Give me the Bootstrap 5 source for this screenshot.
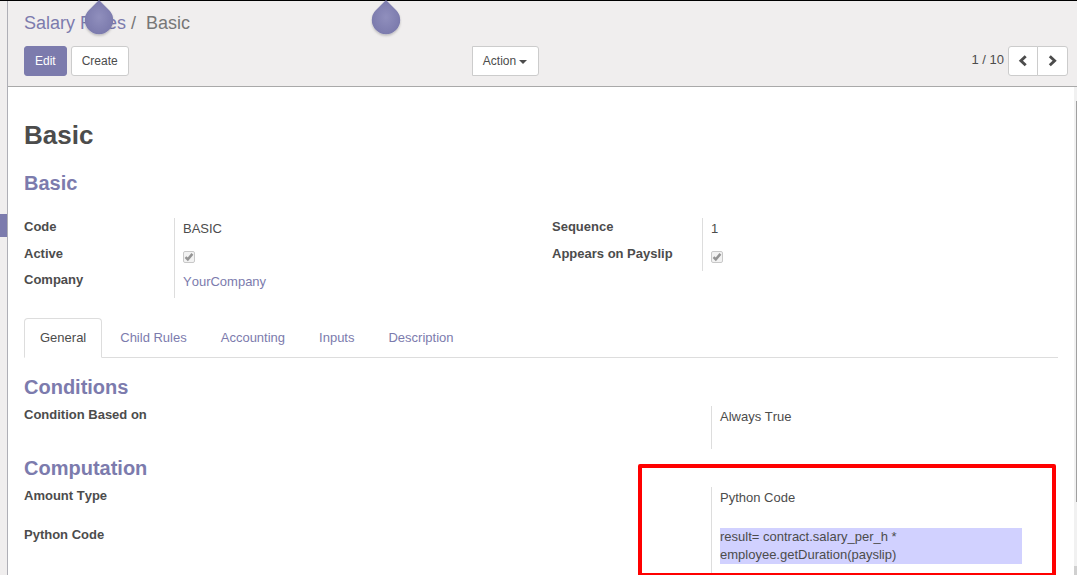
<!DOCTYPE html>
<html lang="en">
<head>
<meta charset="utf-8">
<title>Salary Rules / Basic</title>
<link href="https://cdn.jsdelivr.net/npm/bootstrap@5.3.0/dist/css/bootstrap.min.css" rel="stylesheet">
<style>
:root { --brand: #7c7bad; --ink: #4c4c4c; --line: #dddddd; }
body { font: 13px/18px "Liberation Sans", Arial, sans-serif; font-kerning: none; color: var(--ink); background: #fff; overflow: hidden; }
a { color: var(--brand); text-decoration: none; }
.app { height: 575px; border-top: 1px solid #000; }
.side { width: 8px; background: #f0eeee; border-right: 1px solid #afafb6; padding-top: 213px; }
.side-active { width: 7px; height: 23px; background: var(--brand); }
.panel { height: 86px; background: #f0eeee; border-bottom: 1px solid #a9a9a9; padding: 9px 9px 0 16px; }
.crumbs { font-size: 18px; line-height: 26px; height: 36px; color: #777; white-space: pre; }
.btn { --bs-btn-font-size: 12px; --bs-btn-line-height: 18px; --bs-btn-padding-x: 10px; --bs-btn-padding-y: 5px; --bs-btn-border-radius: 3px; height: 30px; }
.btn-brand { --bs-btn-color: #fff; --bs-btn-bg: #7c7bad; --bs-btn-border-color: #7c7bad; }
.btn-plain { --bs-btn-color: #4c4c4c; --bs-btn-bg: #fff; --bs-btn-border-color: #ccc; }
.btn-group > .btn-plain { width: 30px; padding: 0; }
.btn-group > .btn-plain + .btn-plain { width: 31px; }
.action { width: 67px; border-radius: 0 3px 3px 0; }
.toolbar { display: grid; grid-template-columns: 448px 1fr auto; }
.action::after { margin-left: 3px; margin-right: 1px; vertical-align: 1px; border-top-width: 4px; border-left-width: 4px; border-right-width: 4px; }
.pager-text { line-height: 28px; margin-right: 4px; }
.sheet { padding: 33px 16px 0; height: 488px; }
h1 { font-size: 26px; line-height: 30px; font-weight: 700; margin: 0 0 21px; }
h2 { font-size: 20px; line-height: 24px; font-weight: 700; color: var(--brand); margin: 0; }
.nav-tabs + h2 { margin-top: 17px; }
.fields { display: grid; grid-template-columns: 150px 1fr; align-content: start; grid-auto-rows: 27px; width: 528px; }
.fields-wide { grid-template-columns: 687px 1fr; width: 1034px; }
.fields label { font-weight: 700; }
.value { border-left: 1px solid var(--line); padding: 2px 0 0 8px; }
.groups { margin-top: 23px; height: 100px; }
.left-group { grid-template-rows: 27px 26px 27px; }
.right-group { width: 506px; grid-template-rows: 27px 26px; }
.tick { display: block; margin-top: 4px; }
.nav-tabs { --bs-nav-tabs-border-color: #ddd; --bs-nav-tabs-link-active-color: #4c4c4c; --bs-nav-tabs-link-active-border-color: #ddd #ddd #fff; --bs-nav-tabs-border-radius: 4px; --bs-nav-link-padding-x: 15px; --bs-nav-link-padding-y: 10px; --bs-nav-link-color: #7c7bad; column-gap: 2px; height: 40px; }
.nav-tabs .nav-link { height: 40px; }
.conditions { margin: 7px 0; height: 43px; grid-auto-rows: 43px; }
.computation { margin-top: 7px; grid-template-rows: 39px 47px; }
.code { background: #d1d1ff; width: 302px; }
.marker { left: 638px; top: 464px; width: 418px; height: 113px; border: 4px solid #f00; border-radius: 2px; }
.scroll { width: 3px; height: 488px; background: #f1f1f1; padding-top: 14px; }
.thumb { width: 1px; height: 401px; margin-left: 2px; background: #a0a0a0; }
.scroll-end { height: 9px; margin-top: 64px; background: #d0d0d0; }
.drop { top: 0; }
.drop-one { left: 80px; }
.drop-two { left: 367px; }
</style>
</head>
<body>
<div class="app d-flex">
  <aside class="side flex-shrink-0"><div class="side-active"></div></aside>
  <main class="flex-grow-1">
    <header class="panel">
      <div class="crumbs"><a href="#">Salary Rules</a> /  Basic</div>
      <div class="toolbar">
        <div class="d-flex gap-1 align-items-start"><button class="btn btn-brand">Edit</button><button class="btn btn-plain">Create</button></div>
        <div><button class="btn btn-plain action dropdown-toggle px-0">Action</button></div>
        <div class="d-flex">
          <span class="pager-text">1 / 10</span>
          <div class="btn-group">
            <button class="btn btn-plain" aria-label="Previous"><svg class="d-block mx-auto" width="10" height="12" viewBox="0 0 10 12"><path d="M7.7 1.2 2.9 5.7l4.8 4.5" fill="none" stroke="#4c4c4c" stroke-width="2.9"/></svg></button>
            <button class="btn btn-plain" aria-label="Next"><svg class="d-block mx-auto" width="10" height="12" viewBox="0 0 10 12"><path d="M1.8 1.2 6.6 5.7l-4.8 4.5" fill="none" stroke="#4c4c4c" stroke-width="2.9"/></svg></button>
          </div>
        </div>
      </div>
    </header>
    <div class="d-flex">
      <section class="sheet flex-grow-1">
        <h1>Basic</h1>
        <h2>Basic</h2>
        <div class="groups d-flex">
          <div class="fields left-group">
            <label>Code</label><div class="value">BASIC</div>
            <label>Active</label><div class="value"><svg class="tick" width="12" height="12" viewBox="0 0 12 12"><rect x=".5" y=".5" width="11" height="11" rx="1.5" fill="#f2f2f2" stroke="#c8c8c8"/><path d="M2.5 6.2 4.8 8.4 9.4 2.9" fill="none" stroke="#949494" stroke-width="2.5"/></svg></div>
            <label>Company</label><div class="value"><a href="#">YourCompany</a></div>
          </div>
          <div class="fields right-group">
            <label>Sequence</label><div class="value">1</div>
            <label>Appears on Payslip</label><div class="value"><svg class="tick" width="12" height="12" viewBox="0 0 12 12"><rect x=".5" y=".5" width="11" height="11" rx="1.5" fill="#f2f2f2" stroke="#c8c8c8"/><path d="M2.5 6.2 4.8 8.4 9.4 2.9" fill="none" stroke="#949494" stroke-width="2.5"/></svg></div>
          </div>
        </div>
        <ul class="nav nav-tabs">
          <li class="nav-item"><a class="nav-link active" href="#">General</a></li>
          <li class="nav-item"><a class="nav-link" href="#">Child Rules</a></li>
          <li class="nav-item"><a class="nav-link" href="#">Accounting</a></li>
          <li class="nav-item"><a class="nav-link" href="#">Inputs</a></li>
          <li class="nav-item"><a class="nav-link" href="#">Description</a></li>
        </ul>
        <h2>Conditions</h2>
        <div class="fields fields-wide conditions"><label>Condition Based on</label><div class="value">Always True</div></div>
        <h2>Computation</h2>
        <div class="fields fields-wide computation">
          <label>Amount Type</label><div class="value">Python Code</div>
          <label>Python Code</label><div class="value"><div class="code">result= contract.salary_per_h *<br>employee.getDuration(payslip)</div></div>
        </div>
      </section>
      <div class="scroll"><div class="thumb"></div><div class="scroll-end"></div></div>
    </div>
  </main>
</div>
<!-- selection handles and highlight frame float above the form -->
<svg class="drop drop-one position-absolute" width="38" height="40" viewBox="0 0 38 40"><defs><radialGradient id="dg"><stop offset="0" stop-color="#908fbd"/><stop offset="1" stop-color="#7c7bad"/></radialGradient><filter id="ds" x="-30%" y="-30%" width="160%" height="160%"><feDropShadow dx="0" dy="1.5" stdDeviation="1.2" flood-opacity=".22"/></filter></defs><path d="M19 0 29 10A14.2 14.2 0 1 1 9 10Z" fill="url(#dg)" filter="url(#ds)"/></svg>
<svg class="drop drop-two position-absolute" width="38" height="40" viewBox="0 0 38 40"><path d="M19 0 29 10A14.2 14.2 0 1 1 9 10Z" fill="url(#dg)" filter="url(#ds)"/></svg>
<div class="marker position-absolute"></div>
<script src="https://cdn.jsdelivr.net/npm/bootstrap@5.3.0/dist/js/bootstrap.bundle.min.js"></script>
</body>
</html>
